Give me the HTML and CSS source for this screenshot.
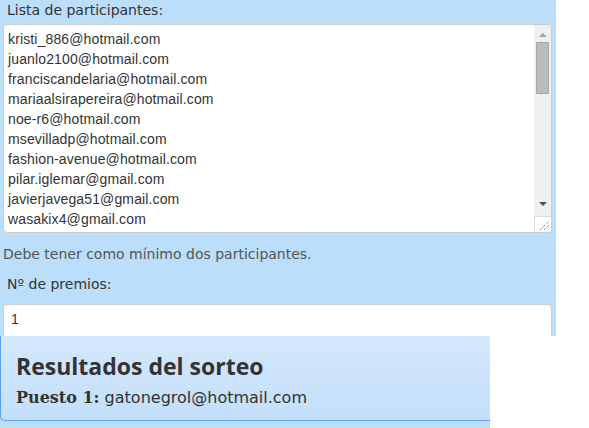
FILE: index.html
```html
<!DOCTYPE html>
<html lang="es">
<head>
<meta charset="utf-8">
<link rel="stylesheet" href="styles.css">
</head>
<body>
<div class="form">
  <div class="label">Lista de participantes:</div>
  <div class="textarea">
    <div class="lines">
      <div>kristi_886@hotmail.com</div>
      <div>juanlo2100@hotmail.com</div>
      <div>franciscandelaria@hotmail.com</div>
      <div>mariaalsirapereira@hotmail.com</div>
      <div>noe-r6@hotmail.com</div>
      <div>msevilladp@hotmail.com</div>
      <div>fashion-avenue@hotmail.com</div>
      <div>pilar.iglemar@gmail.com</div>
      <div>javierjavega51@gmail.com</div>
      <div>wasakix4@gmail.com</div>
    </div>
    <div class="scrollbar">
      <div class="arrow up"></div>
      <div class="thumb"></div>
      <div class="track"></div>
      <div class="arrow down"></div>
      <div class="resizer">
        <svg width="16" height="16" viewBox="0 0 16 16"><path d="M5 14 L14 5 M9 14 L14 9" stroke="#666" stroke-width="1" stroke-dasharray="1 1"/></svg>
      </div>
    </div>
  </div>
  <div class="help">Debe tener como mínimo dos participantes.</div>
  <div class="label label2">Nº de premios:</div>
  <div class="input">1</div>
</div>
<div class="results-wrap">
  <div class="results">
    <h2 class="title">Resultados del sorteo</h2>
    <p class="winner"><b>Puesto 1:</b> gatonegrol@hotmail.com</p>
  </div>
</div>
</body>
</html>
```
FILE: styles.css
```css
html, body { margin: 0; padding: 0; background: #fff; }
body { color: #333; font-family: "DejaVu Sans", sans-serif; }

.form {
  width: 556px;
  height: 336px;
  overflow: hidden;
  background: #bbdefb;
  box-sizing: border-box;
}
.label {
  font-size: 14px;
  line-height: 20px;
  padding: 0 0 0 7px;
  height: 24px;
  color: #333;
}
.textarea {
  margin-left: 3px;
  width: 549px;
  height: 209px;
  box-sizing: border-box;
  background: #fff;
  border: 1px solid #ccc;
  border-radius: 4px;
  display: flex;
  overflow: hidden;
}
.lines {
  flex: 1;
  padding: 4px 0 0 4px;
  font-family: "Liberation Sans", Arial, sans-serif;
  font-size: 14px;
  letter-spacing: 0.13px;
  line-height: 20px;
  color: #333;
}
.scrollbar {
  width: 17px;
  background: #f0f0f0;
  display: flex;
  flex-direction: column;
  align-items: center;
}
.arrow { width: 0; height: 0; border-left: 4px solid transparent; border-right: 4px solid transparent; }
.arrow.up { border-bottom: 4px solid #a3a3a3; margin-top: 8px; }
.arrow.down { border-top: 4px solid #505050; margin-bottom: 10px; }
.thumb {
  margin-top: 5px;
  width: 13px;
  height: 52px;
  box-sizing: border-box;
  background: #bcbcbc;
  border: 1px solid #a8a8a8;
}
.track { flex: 1; }
.resizer {
  width: 17px;
  height: 16px;
  box-sizing: border-box;
  background: #fff;
  border-left: 1px solid #dcdcdc;
  border-top: 1px solid #dcdcdc;
  display: flex;
  align-items: flex-end;
  justify-content: flex-end;
}
.resizer svg { display: block; }
.help {
  font-size: 14px;
  color: #555;
  padding: 12px 0 0 3px;
  line-height: 19px;
  height: 19px;
}
.label2 { padding-top: 10px; height: 20px; }
.input {
  margin: 10px 0 0 3px;
  width: 549px;
  height: 40px;
  box-sizing: border-box;
  background: #fff;
  border: 1px solid #ccc;
  border-radius: 4px;
  padding: 5px 0 0 7px;
  font-family: "Liberation Sans", Arial, sans-serif;
  font-size: 14px;
  line-height: 18px;
}
.results-wrap {
  width: 490px;
  height: 92px;
  background: #bbdefb;
}
.results {
  height: 85px;
  box-sizing: border-box;
  border-left: 1px solid #5d9ff0;
  border-bottom: 1px solid #5d9ff0;
  border-bottom-left-radius: 5px;
  background: linear-gradient(#d4e8fc, #c3dffa);
  padding: 16px 0 0 15px;
}
.title {
  margin: 0;
  font-family: "Open Sans", sans-serif;
  font-weight: bold;
  font-size: 23px;
  line-height: 28px;
  color: #333;
}
.winner {
  margin: 8px 0 0;
  font-size: 16px;
  line-height: 20px;
  color: #333;
}
.winner b { font-family: "DejaVu Serif", serif; }
```
